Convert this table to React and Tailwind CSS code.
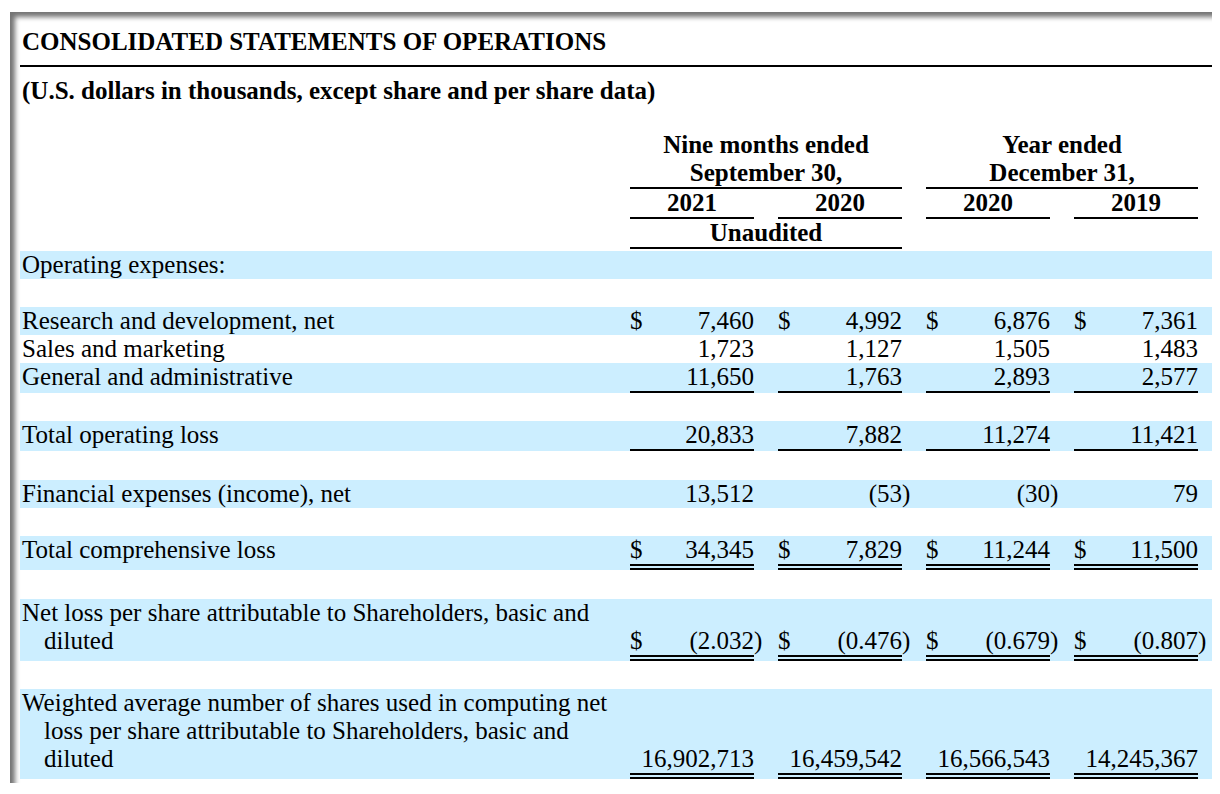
const serif = { fontFamily: '"Liberation Serif", "Times New Roman", serif' };

const grid = 'grid grid-cols-[610px_124px_24px_124px_24px_124px_24px_124px_14px]';

const rows = [
  { label: ['Operating expenses:'], shaded: true },
  { spacer: 28 },
  {
    label: ['Research and development, net'],
    shaded: true,
    values: [['$', '7,460'], ['$', '4,992'], ['$', '6,876'], ['$', '7,361']],
  },
  { label: ['Sales and marketing'], values: [['', '1,723'], ['', '1,127'], ['', '1,505'], ['', '1,483']] },
  {
    label: ['General and administrative'],
    shaded: true,
    line: 'single',
    values: [['', '11,650'], ['', '1,763'], ['', '2,893'], ['', '2,577']],
  },
  { spacer: 28 },
  {
    label: ['Total operating loss'],
    shaded: true,
    line: 'single',
    values: [['', '20,833'], ['', '7,882'], ['', '11,274'], ['', '11,421']],
  },
  { spacer: 29 },
  {
    label: ['Financial expenses (income), net'],
    shaded: true,
    values: [['', '13,512'], ['', '(53', ')'], ['', '(30', ')'], ['', '79']],
  },
  { spacer: 28 },
  {
    label: ['Total comprehensive loss'],
    shaded: true,
    line: 'double',
    values: [['$', '34,345'], ['$', '7,829'], ['$', '11,244'], ['$', '11,500']],
  },
  { spacer: 29 },
  {
    label: ['Net loss per share attributable to Shareholders, basic and', 'diluted'],
    shaded: true,
    line: 'double',
    values: [['$', '(2.032', ')'], ['$', '(0.476', ')'], ['$', '(0.679', ')'], ['$', '(0.807', ')']],
  },
  { spacer: 28 },
  {
    label: [
      'Weighted average number of shares used in computing net',
      'loss per share attributable to Shareholders, basic and',
      'diluted',
    ],
    shaded: true,
    line: 'double',
    values: [['', '16,902,713'], ['', '16,459,542'], ['', '16,566,543'], ['', '14,245,367']],
  },
];

function Row({ row }) {
  if (row.spacer) return <div className={row.spacer === 29 ? 'h-[29px]' : 'h-[28px]'} />;
  const pad = row.line === 'double' ? 'pb-[6px]' : row.line === 'single' ? 'pb-[2px]' : '';
  const border =
    row.line === 'double'
      ? 'border-b-[6px] border-double border-black'
      : row.line === 'single'
      ? 'border-b-2 border-black'
      : '';
  return (
    <div className={`${grid} ${row.shaded ? 'bg-[#cceeff]' : ''}`}>
      <div className={`pl-[2px] ${pad}`}>
        {row.label.map((l, i) => (
          <div key={i} className={i > 0 ? 'pl-[22px]' : ''}>
            {l}
          </div>
        ))}
      </div>
      {[0, 1, 2, 3].map((i) => {
        const v = row.values ? row.values[i] : null;
        return [
          <div key={'v' + i} className={`flex items-end justify-between ${v ? border : ''} ${v ? '' : pad}`}>
            {v && (
              <>
                <span>{v[0]}</span>
                <span>{v[1]}</span>
              </>
            )}
          </div>,
          <div key={'p' + i} className={`flex items-end ${pad}`}>
            {v && v[2]}
          </div>,
        ];
      })}
    </div>
  );
}

export default function App() {
  return (
    <div className="min-h-[794px] w-[1220px] bg-white pl-[10px] pt-[12px] text-black" style={serif}>
      <div className="w-[1202px] pl-[10px] pt-[16px] pb-[4px] shadow-[inset_6px_6px_5px_-1px_rgba(0,0,0,0.55)] text-[25px] leading-[28px]">
        <div className="border-b-2 border-black pb-[9px] pl-[2px] font-bold">
          CONSOLIDATED STATEMENTS OF OPERATIONS
        </div>
        <div className="mt-[10px] pl-[2px] font-bold">
          (U.S. dollars in thousands, except share and per share data)
        </div>

        <div className="mt-[26px] font-bold">
          <div className={grid}>
            <div />
            <div className="col-span-3 border-b-2 border-black text-center">
              <div>Nine months ended</div>
              <div>September 30,</div>
            </div>
            <div />
            <div className="col-span-3 border-b-2 border-black text-center">
              <div>Year ended</div>
              <div>December 31,</div>
            </div>
            <div />
          </div>
          <div className={grid}>
            <div />
            <div className="border-b-2 border-black text-center">2021</div>
            <div />
            <div className="border-b-2 border-black text-center">2020</div>
            <div />
            <div className="border-b-2 border-black text-center">2020</div>
            <div />
            <div className="border-b-2 border-black text-center">2019</div>
            <div />
          </div>
          <div className={grid}>
            <div />
            <div className="col-span-3 border-b-2 border-black text-center">Unaudited</div>
            <div className="col-span-5" />
          </div>
        </div>

        <div className="mt-[2px]">
          {rows.map((r, i) => (
            <Row key={i} row={r} />
          ))}
        </div>
      </div>
    </div>
  );
}
